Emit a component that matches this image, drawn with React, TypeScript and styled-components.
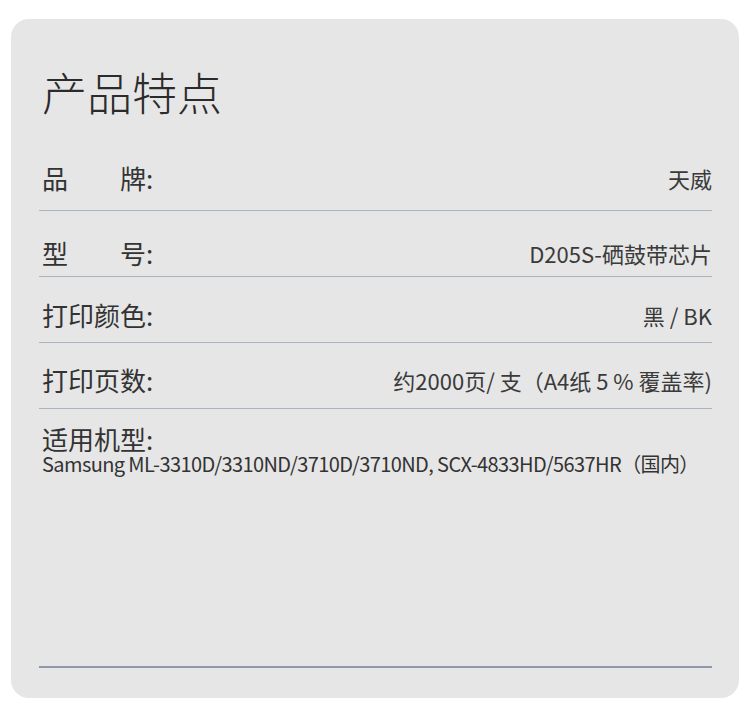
import styled, { createGlobalStyle } from 'styled-components';

const GlobalStyle = createGlobalStyle`
  html, body {
    margin: 0;
    padding: 0;
    background: #ffffff;
  }
  body {
    font-family: "Noto Sans CJK SC", "Noto Sans", sans-serif;
    color: #333;
  }
`;

type Spec = { label: string; value: string; spread?: boolean; pad: number };

const specs: Spec[] = [
  { label: '品牌', value: '天威', spread: true, pad: 19 },
  { label: '型号', value: 'D205S-硒鼓带芯片', spread: true, pad: 10 },
  { label: '打印颜色', value: '黑 / BK', pad: 14 },
  { label: '打印页数', value: '约2000页/ 支（A4纸 5 % 覆盖率)', pad: 15 },
];

export default function App() {
  return (
    <>
      <GlobalStyle />
      <Card>
        <Title>产品特点</Title>
        <List>
          {specs.map((s) => (
            <Row key={s.label} $pad={s.pad}>
              <Label>
                <LabelText $spread={s.spread}>{s.label}</LabelText>:
              </Label>
              <Value>{s.value}</Value>
            </Row>
          ))}
        </List>
        <Models>
          <Label>
            <LabelText>适用机型</LabelText>:
          </Label>
          <ModelList>
            Samsung ML-3310D/3310ND/3710D/3710ND, SCX-4833HD/5637HR（国内）
          </ModelList>
        </Models>
        <BottomRule />
      </Card>
    </>
  );
}

const Card = styled.div`
  margin: 19px 11px 0 11px;
  height: 679px;
  box-sizing: border-box;
  border-radius: 18px;
  background: #e6e6e6;
  padding: 0 27px 0 28px;
  display: flex;
  flex-direction: column;
`;

const Title = styled.h1`
  margin: 50px 0 0 3px;
  font-size: 45px;
  line-height: 45px;
  font-weight: 300;
  color: #2b2b2b;
`;

const List = styled.div`
  margin-top: 31px;
  display: flex;
  flex-direction: column;
`;

const Row = styled.div<{ $pad: number }>`
  height: 66px;
  box-sizing: border-box;
  display: flex;
  align-items: flex-end;
  justify-content: space-between;
  padding: 0 0 ${(p) => p.$pad}px 3px;
  border-bottom: 1px solid #a9b4bf;
`;

const Label = styled.div`
  font-size: 26px;
  line-height: 26px;
  color: #333;
  white-space: nowrap;
`;

const LabelText = styled.span<{ $spread?: boolean }>`
  display: inline-block;
  width: ${(p) => (p.$spread ? '104px' : 'auto')};
  text-align: justify;
  text-align-last: ${(p) => (p.$spread ? 'justify' : 'auto')};
`;

const Value = styled.div`
  font-size: 22px;
  line-height: 26px;
  color: #3a3a3a;
  white-space: nowrap;
`;

const Models = styled.div`
  padding: 17px 0 0 3px;
  display: flex;
  flex-direction: column;
`;

const ModelList = styled.div`
  font-size: 20px;
  line-height: 24px;
  color: #333;
  letter-spacing: -0.6px;
  white-space: nowrap;
`;

const BottomRule = styled.div`
  margin-top: auto;
  margin-bottom: 30px;
  height: 2px;
  background: #8f98a9;
`;
